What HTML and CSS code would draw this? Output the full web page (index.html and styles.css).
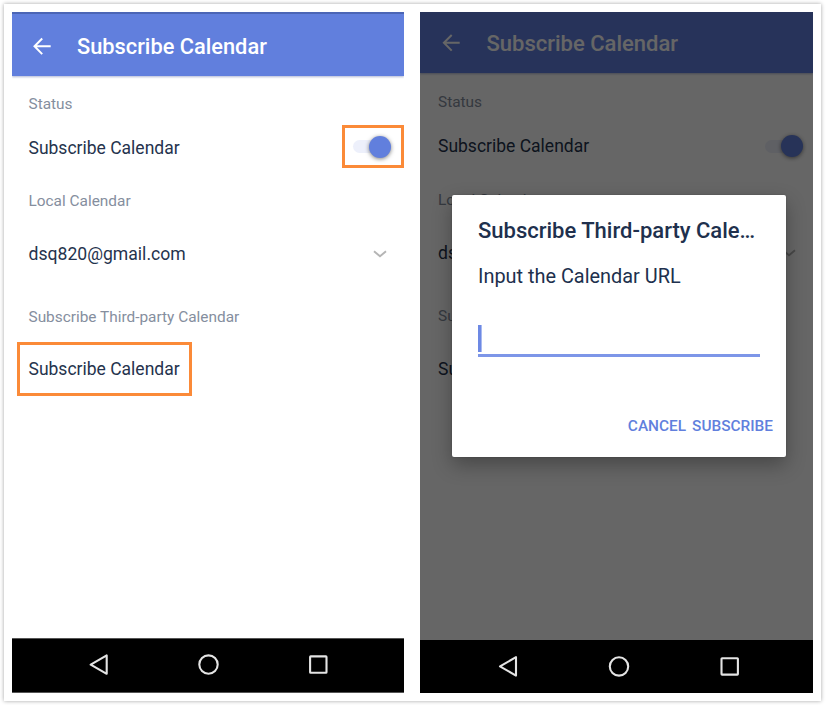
FILE: index.html
```html
<!DOCTYPE html>
<html lang="en">
<head>
<meta charset="utf-8">
<title>Subscribe Calendar</title>
<link rel="stylesheet" href="styles.css">
</head>
<body>
<main class="frame">
  <section class="phone">
    <header class="bar">
      <svg class="back" width="18" height="18" viewBox="0 0 18 18"><path d="M17.7 8.3H1.8M9.2 .5L1.5 8.3L9.2 16.1"/></svg>
      <h1 class="title">Subscribe Calendar</h1>
    </header>
    <div class="content">
      <div class="label status">Status</div>
      <div class="row switch-row"><span class="name">Subscribe Calendar</span><span class="mark-switch"><span class="switch"><span class="knob"></span></span></span></div>
      <div class="label local">Local Calendar</div>
      <div class="row account"><span class="mail">dsq820@gmail.com</span><svg class="chevron" width="14" height="8" viewBox="0 0 14 8"><path d="M1 1.3L7 6.3L13 1.3"/></svg></div>
      <div class="label third">Subscribe Third-party Calendar</div>
      <div class="mark-row"><span class="name">Subscribe Calendar</span></div>
    </div>
    <nav class="nav">
      <svg width="20" height="22" viewBox="0 0 20 22"><path d="M17.7 1.4V19.8L1.7 10.6Z"/></svg>
      <svg width="22" height="22" viewBox="0 0 22 22"><circle cx="10.5" cy="10.6" r="9.2"/></svg>
      <svg width="20" height="20" viewBox="0 0 20 20"><rect x="2.1" y="1.4" width="16.4" height="16.4" rx=".6"/></svg>
    </nav>
  </section>
  <section class="phone second">
    <header class="bar">
      <svg class="back" width="18" height="18" viewBox="0 0 18 18"><path d="M18.7 7.8H3M10.7 0L2.9 7.8L10.7 15.6"/></svg>
      <h1 class="title">Subscribe Calendar</h1>
    </header>
    <div class="content">
      <div class="label status">Status</div>
      <div class="row switch-row"><span class="name">Subscribe Calendar</span><span class="switch"><span class="knob"></span></span></div>
      <div class="label local">Local Calendar</div>
      <div class="row account"><span class="mail">dsq820@gmail.com</span><svg class="chevron" width="14" height="8" viewBox="0 0 14 8"><path d="M1 1.3L7 6.3L13 1.3"/></svg></div>
      <div class="label third">Subscribe Third-party Calendar</div>
      <div class="row last"><span class="name">Subscribe Calendar</span></div>
    </div>
    <nav class="nav">
      <svg width="20" height="22" viewBox="0 0 20 22"><path d="M18 1.2V19.6L2 10.4Z"/></svg>
      <svg width="22" height="22" viewBox="0 0 22 22"><circle cx="11" cy="10.4" r="9.2"/></svg>
      <svg width="20" height="20" viewBox="0 0 20 20"><rect x="1.5" y="1.2" width="16.4" height="16.4" rx=".6"/></svg>
    </nav>
    <div class="scrim"></div>
    <div class="dialog">
      <h2 class="dialog-title">Subscribe Third-party Cale…</h2>
      <p class="prompt">Input the Calendar URL</p>
      <div class="field"><span class="caret"></span></div>
      <div class="actions"><span class="cancel">CANCEL</span><span class="subscribe">SUBSCRIBE</span></div>
    </div>
  </section>
</main>
</body>
</html>
```
FILE: styles.css
```css
* { box-sizing: border-box; }
body {
  margin: 0;
  padding: 4px;
  background: #fff;
  font-family: Roboto, "Liberation Sans", sans-serif;
}
.frame {
  display: flex;
  gap: 16px;
  width: 817px;
  height: 697px;
  padding: 8px;
  background: #fff;
  box-shadow: 0 0 4px rgba(0, 0, 0, .36);
}
.phone {
  position: relative;
  display: flex;
  flex-direction: column;
  width: 392px;
  height: 681px;
  overflow: hidden;
  background: #fff;
  color: #25334d;
}
.second { width: 393px; }
.bar {
  display: flex;
  align-items: center;
  height: 64px;
  padding: 3px 0 0 21px;
  background: #617fdd;
  border-top: 2px solid #4b65b5;
  box-shadow: 0 1px 2px rgba(60, 80, 150, .4);
}
.second .bar { height: 61px; padding-top: 0; background: #6380e0; border-top-color: #6380e0; }
.back { overflow: visible; fill: none; stroke: #fff; stroke-width: 2; }
.title {
  margin: 0 0 0 26px;
  font-size: 21.8px;
  line-height: 28px;
  font-weight: 500;
  color: #fff;
  white-space: nowrap;
}
.second .bar .title { margin-left: 27.5px; font-size: 22px; }
.content { flex: 1; padding-left: 16.5px; }
.second .content { padding-left: 18px; }
.label {
  height: 20px;
  font-size: 15.4px;
  line-height: 20px;
  color: #858e9e;
}
.row {
  display: flex;
  align-items: center;
  justify-content: space-between;
  height: 20px;
  font-size: 17.6px;
  line-height: 20px;
}
.name { font-size: 17.5px; }
.status { margin-top: 18px; }
.second .status { margin-top: 19px; }
.switch-row { margin-top: 24px; }
.local { margin-top: 33px; }
.second .local { margin-top: 34px; }
.account { margin-top: 33px; padding-right: 17px; }
.third { margin-top: 43px; }
.last { margin-top: 33px; }
.second .switch-row { padding-right: 10px; }
.mark-switch {
  position: relative;
  top: -2px;
  display: flex;
  align-items: center;
  flex: none;
  width: 62px;
  height: 43px;
  padding: 1px 0 0 8px;
  margin: -12px 0;
  border: 3px solid #fb8a38;
}
.mark-row {
  display: flex;
  align-items: center;
  width: 175px;
  height: 54px;
  margin: 15px 0 0 -11.5px;
  padding-left: 8.5px;
  border: 3px solid #fb8a38;
  line-height: 20px;
}
.switch {
  display: flex;
  align-items: center;
  justify-content: flex-end;
  width: 38px;
  height: 13px;
  border-radius: 7px;
  background: #edf0fb;
}
.knob {
  flex: none;
  width: 22px;
  height: 22px;
  border-radius: 50%;
  background: #617fdd;
  box-shadow: 0 1px 4px rgba(0, 0, 0, .5);
}
.chevron { fill: none; stroke: #b5b5b5; stroke-width: 1.9; }
.nav {
  display: flex;
  align-items: center;
  justify-content: space-between;
  height: 55px;
  padding: 0 76px 2px 77px;
  background: #000;
  border-top: 1px solid #555;
  border-bottom: 1px solid #555;
}
.nav svg { fill: none; stroke: #e4e4e4; stroke-width: 2.1; stroke-linejoin: round; }
.second .nav { position: relative; z-index: 1; height: 53px; padding: 0 73px 0 78px; border: 0; }
.scrim { position: absolute; inset: 0; background: rgba(0, 0, 0, .6); }
.dialog {
  position: absolute;
  left: 32px;
  top: 182.5px;
  width: 334px;
  height: 262px;
  padding: 21px 26px 0;
  border-radius: 2px;
  background: #fff;
  color: #20304d;
  box-shadow: 0 8px 20px rgba(0, 0, 0, .3), 0 0 2px rgba(0, 0, 0, .2);
}
.dialog-title {
  margin: 0;
  font-size: 22px;
  line-height: 30px;
  font-weight: 500;
  white-space: nowrap;
}
.prompt { margin: 16px 0 0; font-size: 19.9px; line-height: 30px; }
.field {
  width: 282px;
  height: 32px;
  margin-top: 33px;
  border-bottom: 3px solid #7d96e8;
}
.caret { display: block; width: 2.5px; height: 27px; background: #6d89e4; border-right: 1px solid #a9baf0; box-sizing: content-box; }
.actions {
  display: flex;
  justify-content: flex-end;
  gap: 6px;
  margin: 59.5px -13px 0 0;
  font-size: 15.4px;
  line-height: 20px;
  font-weight: 500;
  color: #617fdd;
}
```
